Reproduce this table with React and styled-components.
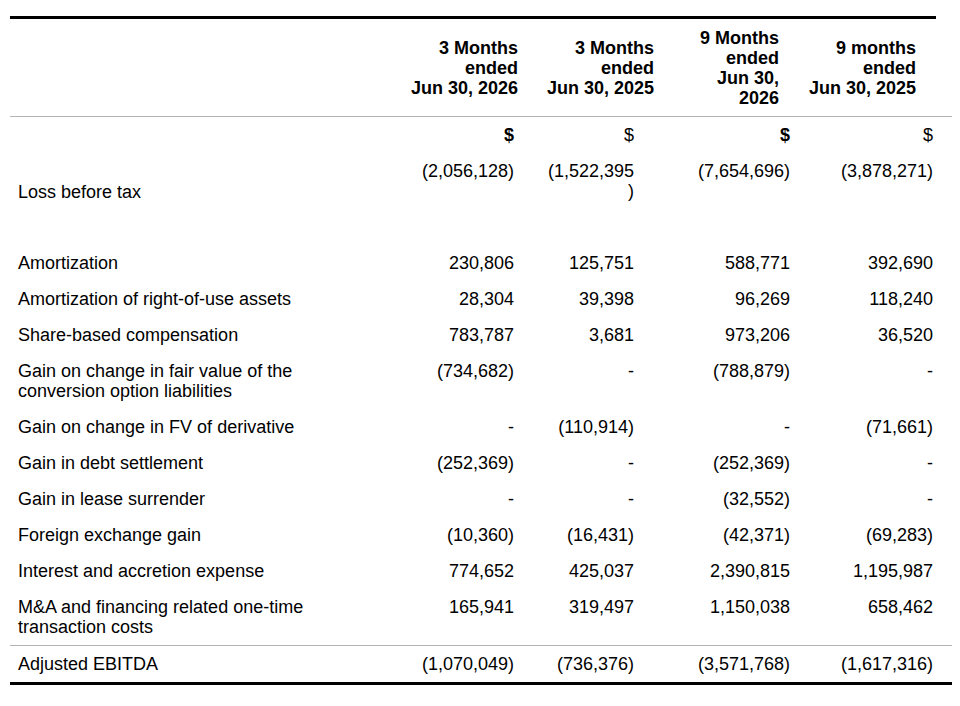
import React from 'react'
import styled, { createGlobalStyle } from 'styled-components'

const GlobalStyle = createGlobalStyle`
  body {
    margin: 0;
    background: #fff;
    color: #000;
    font-family: "Liberation Sans", Arial, Helvetica, sans-serif;
  }
`

const COLS = '390px 130px 135px 135px 152px'

// right / left padding of each number column, header vs body
const headPad = [[12, 4], [11, 4], [21, 10], [36, 4]]
const bodyPad = [[16, 10], [31, 10], [10, 10], [19, 10]]

const Page = styled.div`
  width: 942px;
  padding: 16px 8px 0 10px;
`

const TopRule = styled.div`
  height: 3px;
  margin-right: 16px;
  background: #000;
`

const BottomRule = styled.div`
  height: 3px;
  background: #000;
`

const HeadRow = styled.div`
  display: grid;
  grid-template-columns: ${COLS};
  align-items: center;
  height: 97px;
  border-bottom: 1px solid #b4b4b4;
`

const HeadCell = styled.div`
  text-align: right;
  font-weight: bold;
  font-size: 18px;
  line-height: 20px;
  white-space: pre-line;
  padding: 0 ${p => p.$pr}px 0 ${p => p.$pl}px;
`

const Row = styled.div`
  display: grid;
  grid-template-columns: ${COLS};
  align-items: start;
  border-top: ${p => (p.$total ? '1px solid #b4b4b4' : 'none')};
  min-height: ${p => p.$height || 36}px;
  box-sizing: border-box;
`

const Label = styled.div`
  font-size: 18px;
  line-height: 20px;
  padding: ${p => p.$top || 8}px 0 8px 8px;
  width: 300px;
`

const Value = styled.div`
  font-size: 18px;
  line-height: 20px;
  text-align: right;
  white-space: pre-line;
  font-weight: ${p => (p.$bold ? 'bold' : 'normal')};
  padding: 8px ${p => p.$pr}px 8px ${p => p.$pl}px;
`

const headers = [
  '3 Months\nended\nJun 30, 2026',
  '3 Months\nended\nJun 30, 2025',
  '9 Months\nended\nJun 30,\n2026',
  '9 months\nended\nJun 30, 2025',
]

const rows = [
  { label: '', values: ['$', '$', '$', '$'], bold: [true, false, true, false] },
  { label: 'Loss before tax', values: ['(2,056,128)', '(1,522,395\n)', '(7,654,696)', '(3,878,271)'], height: 92, top: 29 },
  { label: 'Amortization', values: ['230,806', '125,751', '588,771', '392,690'] },
  { label: 'Amortization of right-of-use assets', values: ['28,304', '39,398', '96,269', '118,240'] },
  { label: 'Share-based compensation', values: ['783,787', '3,681', '973,206', '36,520'] },
  { label: 'Gain on change in fair value of the conversion option liabilities', values: ['(734,682)', '-', '(788,879)', '-'] },
  { label: 'Gain on change in FV of derivative', values: ['-', '(110,914)', '-', '(71,661)'] },
  { label: 'Gain in debt settlement', values: ['(252,369)', '-', '(252,369)', '-'] },
  { label: 'Gain in lease surrender', values: ['-', '-', '(32,552)', '-'] },
  { label: 'Foreign exchange gain', values: ['(10,360)', '(16,431)', '(42,371)', '(69,283)'] },
  { label: 'Interest and accretion expense', values: ['774,652', '425,037', '2,390,815', '1,195,987'] },
  { label: 'M&A and financing related one-time transaction costs', values: ['165,941', '319,497', '1,150,038', '658,462'], height: 55 },
  { label: 'Adjusted EBITDA', values: ['(1,070,049)', '(736,376)', '(3,571,768)', '(1,617,316)'], total: true },
]

export default function App() {
  return (
    <Page>
      <GlobalStyle />
      <TopRule />
      <HeadRow>
        <div />
        {headers.map((h, i) => (
          <HeadCell key={i} $pr={headPad[i][0]} $pl={headPad[i][1]}>{h}</HeadCell>
        ))}
      </HeadRow>
      {rows.map((r, ri) => (
        <Row key={ri} $height={r.height} $total={r.total}>
          <Label $top={r.top}>{r.label}</Label>
          {r.values.map((v, i) => (
            <Value key={i} $bold={r.bold && r.bold[i]} $pr={bodyPad[i][0]} $pl={bodyPad[i][1]}>{v}</Value>
          ))}
        </Row>
      ))}
      <BottomRule />
    </Page>
  )
}
